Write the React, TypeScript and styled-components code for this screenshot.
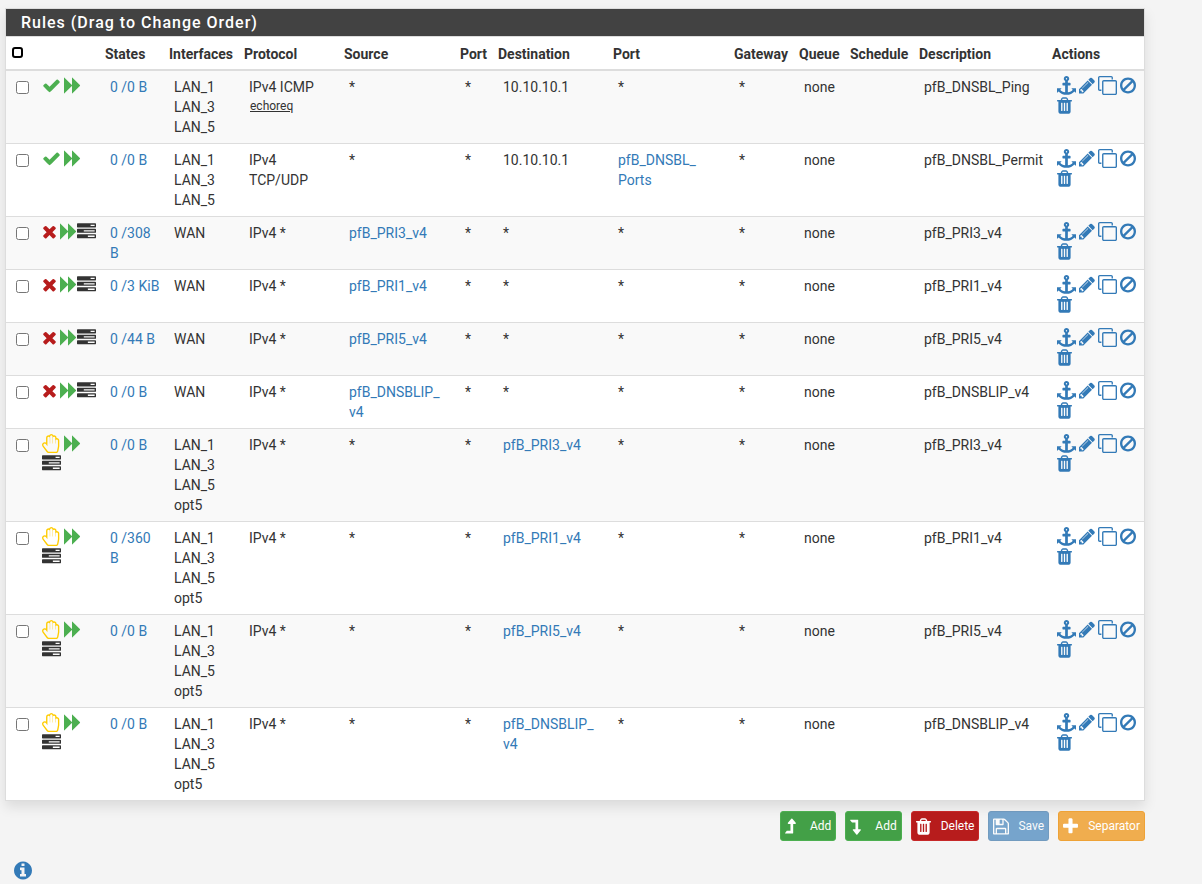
import React from "react";
import styled, { createGlobalStyle, css } from "styled-components";

const GlobalStyle = createGlobalStyle`
  *, *::before, *::after { box-sizing: border-box; }
  body {
    margin: 0;
    background: #f4f4f4;
    color: #333;
    font: 14px/20px Roboto, "Liberation Sans", sans-serif;
  }
`;

type Glyph = { x: number; w: number; d: string };

const glyphs = {
  check: {
    x: 0,
    w: 1792,
    d: "M1671 566q0 40-28 68l-724 724-136 136q-28 28-68 28t-68-28l-136-136-362-362q-28-28-28-68t28-68l136-136q28-28 68-28t68 28l294 295 656-657q28-28 68-28t68 28l136 136q28 28 28 68z",
  },
  times: {
    x: 192,
    w: 1408,
    d: "M1490 1322q0 40-28 68l-136 136q-28 28-68 28t-68-28l-294-294-294 294q-28 28-68 28t-68-28l-136-136q-28-28-28-68t28-68l294-294-294-294q-28-28-28-68t28-68l136-136q28-28 68-28t68 28l294 294 294-294q28-28 68-28t68 28l136 136q28 28 28 68t-28 68l-294 294 294 294q28 28 28 68z",
  },
  hand: {
    x: 0,
    w: 1792,
    d: "M880 128q-46 0-79 33t-33 79v656h-32v-528q0-46-33-79t-79-33-79 33-33 79v784l-154-205q-38-51-102-51-53 0-90.500 37.500t-37.500 90.500q0 43 26 77l384 512q38 51 102 51h688q34 0 61-22t34-56l76-405q5-32 5-59v-498q0-46-33-79t-79-33-79 33-33 79v272h-32v-528q0-46-33-79t-79-33-79 33-33 79v528h-32v-656q0-46-33-79t-79-33zM880 0q68 0 125.500 35.500t88.500 96.500q19-4 42-4 99 0 169.500 70.500t70.500 169.500v17q105-6 180.500 64t75.500 175v498q0 40-8 83l-76 404q-14 79-76.500 131t-143.500 52h-688q-59 0-113.500-27.500t-90.500-74.500l-384-512q-52-69-52-154 0-106 75-181t181-75q70 0 128 34v-434q0-99 70.500-169.500t169.500-70.500q23 0 42 4 31-61 88.500-96.500t125.500-35.500z",
  },
  forward: {
    x: 0,
    w: 1632,
    d: "M45 1651q-19 19-32 13t-13-32v-1472q0-26 13-32t32 13l710 710q9 9 13 19v-710q0-26 13-32t32 13l710 710q19 19 19 45t-19 45l-710 710q-19 19-32 13t-13-32v-710q-4 10-13 19z",
  },
  tasks: {
    x: 0,
    w: 1792,
    d: "M1024 1408h640v-128h-640v128zm-384-512h1024v-128h-1024v128zm640-512h384v-128h-384v128zm512 832v256q0 26-19 45t-45 19h-1664q-26 0-45-19t-19-45v-256q0-26 19-45t45-19h1664q26 0 45 19t19 45zm0-512v256q0 26-19 45t-45 19h-1664q-26 0-45-19t-19-45v-256q0-26 19-45t45-19h1664q26 0 45 19t19 45zm0-512v256q0 26-19 45t-45 19h-1664q-26 0-45-19t-19-45v-256q0-26 19-45t45-19h1664q26 0 45 19t19 45z",
  },
  anchor: {
    x: 0,
    w: 1792,
    d: "M960 256q0-26-19-45t-45-19-45 19-19 45 19 45 45 19 45-19 19-45zm832 928v352q0 22-20 30-8 2-12 2-13 0-23-9l-93-93q-119 143-318.500 226.500t-429.500 83.500-429.500-83.500-318.500-226.500l-93 93q-9 9-23 9-4 0-12-2-20-8-20-30v-352q0-14 9-23t23-9h352q22 0 30 20 8 19-7 35l-100 100q67 91 189.500 153.500t271.500 82.500v-647h-192q-26 0-45-19t-19-45v-128q0-26 19-45t45-19h192v-163q-58-34-93-92.500t-35-128.500q0-106 75-181t181-75 181 75 75 181q0 70-35 128.500t-93 92.500v163h192q26 0 45 19t19 45v128q0 26-19 45t-45 19h-192v647q149-20 271.500-82.500t189.500-153.500l-100-100q-15-16-7-35 8-20 30-20h352q14 0 23 9t9 23z",
  },
  pencil: {
    x: 128,
    w: 1536,
    d: "M491 1536l91-91-235-235-91 91v107h128v128h107zm523-928q0-22-22-22-10 0-17 7l-542 542q-7 7-7 17 0 22 22 22 10 0 17-7l542-542q7-7 7-17zm-54-192l416 416-832 832h-416v-416zm683 96q0 53-37 90l-166 166-416-416 166-165q36-38 90-38 53 0 91 38l235 234q37 39 37 91z",
  },
  clone: {
    x: 0,
    w: 1792,
    d: "M1664 1632v-1088q0-13-9.500-22.500t-22.500-9.500h-1088q-13 0-22.500 9.500t-9.500 22.500v1088q0 13 9.500 22.500t22.500 9.500h1088q13 0 22.500-9.500t9.500-22.500zm128-1088v1088q0 66-47 113t-113 47h-1088q-66 0-113-47t-47-113v-1088q0-66 47-113t113-47h1088q66 0 113 47t47 113zm-384-384v160h-128v-160q0-13-9.500-22.500t-22.500-9.500h-1088q-13 0-22.500 9.500t-9.500 22.500v1088q0 13 9.500 22.500t22.500 9.500h160v128h-160q-66 0-113-47t-47-113v-1088q0-66 47-113t113-47h1088q66 0 113 47t47 113z",
  },
  ban: {
    x: 128,
    w: 1536,
    d: "M1440 893q0-161-87-295l-754 753q137 89 297 89 111 0 211.500-43.500t173.500-116.500 116-174.500 43-212.500zm-999 299l755-754q-135-91-300-91-148 0-273 73t-198 199-73 274q0 162 89 299zm1223-299q0 157-61 300t-163.500 246-245 164-298.500 61-298.500-61-245-164-163.500-246-61-300 61-299.500 163.500-245.500 245-164 298.500-61 298.500 61 245 164 163.500 245.500 61 299.500z",
  },
  trash: {
    x: 192,
    w: 1408,
    d: "M704 1376v-704q0-14-9-23t-23-9h-64q-14 0-23 9t-9 23v704q0 14 9 23t23 9h64q14 0 23-9t9-23zm256 0v-704q0-14-9-23t-23-9h-64q-14 0-23 9t-9 23v704q0 14 9 23t23 9h64q14 0 23-9t9-23zm256 0v-704q0-14-9-23t-23-9h-64q-14 0-23 9t-9 23v704q0 14 9 23t23 9h64q14 0 23-9t9-23zm-544-992h448l-48-117q-7-9-17-11h-317q-10 2-17 11zm928 32v64q0 14-9 23t-23 9h-96v948q0 83-47 143.500t-113 60.500h-832q-66 0-113-58.500t-47-141.500v-952h-96q-14 0-23-9t-9-23v-64q0-14 9-23t23-9h309l70-167q15-37 54-63t79-26h320q40 0 79 26t54 63l70 167h309q14 0 23 9t9 23z",
  },
  levelUp: {
    x: 286,
    w: 1024,
    d: "M1301 619q-18 37-58 37h-192v864q0 14-9 23t-23 9h-704q-21 0-29-18-8-20 4-35l160-192q9-11 25-11h320v-640h-192q-40 0-58-37-17-37 9-68l320-384q18-22 49-22t49 22l320 384q27 32 9 68z",
  },
  levelDown: {
    x: 286,
    w: 1024,
    d: "M315 256h704q13 0 22.500 9.500t9.500 23.500v863h192q40 0 58 37t-9 69l-320 384q-18 22-49 22t-49-22l-320-384q-26-31-9-69 18-37 58-37h192v-640h-320q-14 0-25-11l-160-192q-13-14-4-34 9-19 29-19z",
  },
  save: {
    x: 128,
    w: 1536,
    d: "M512 1536h768v-384h-768v384zm896 0h128v-896q0-14-10-38.500t-20-34.500l-281-281q-10-10-34-20t-39-10v416q0 40-28 68t-68 28h-576q-40 0-68-28t-28-68v-416h-128v1280h128v-416q0-40 28-68t68-28h832q40 0 68 28t28 68v416zm-384-928v-320q0-13-9.500-22.500t-22.500-9.500h-192q-13 0-22.500 9.500t-9.500 22.500v320q0 13 9.500 22.500t22.500 9.500h192q13 0 22.500-9.500t9.500-22.500zm640 32v928q0 40-28 68t-68 28h-1344q-40 0-68-28t-28-68v-1344q0-40 28-68t68-28h928q40 0 88 20t76 48l280 280q28 28 48 76t20 88z",
  },
  plus: {
    x: 192,
    w: 1408,
    d: "M1600 736v192q0 40-28 68t-68 28h-416v416q0 40-28 68t-68 28h-192q-40 0-68-28t-28-68v-416h-416q-40 0-68-28t-28-68v-192q0-40 28-68t68-28h416v-416q0-40 28-68t68-28h192q40 0 68 28t28 68v416h416q40 0 68 28t28 68z",
  },
  info: {
    x: 128,
    w: 1536,
    d: "M1152 1376v-160q0-14-9-23t-23-9h-96v-512q0-14-9-23t-23-9h-320q-14 0-23 9t-9 23v160q0 14 9 23t23 9h96v320h-96q-14 0-23 9t-9 23v160q0 14 9 23t23 9h448q14 0 23-9t9-23zm-128-896v-160q0-14-9-23t-23-9h-192q-14 0-23 9t-9 23v160q0 14 9 23t23 9h192q14 0 23-9t9-23zm640 416q0 209-103 385.500t-279.500 279.500-385.500 103-385.500-103-279.500-279.500-103-385.500 103-385.500 279.500-279.500 385.500-103 385.500 103 279.500 279.500 103 385.500z",
  },
} satisfies Record<string, Glyph>;

type GlyphName = keyof typeof glyphs;

const Svg = styled.svg`
  display: block;
  flex: none;
  fill: currentColor;
`;

function Icon({ name, size = 19 }: { name: GlyphName; size?: number }) {
  const g = glyphs[name];
  return (
    <Svg
      viewBox={`${g.x} 0 ${g.w} 1792`}
      width={Math.round((size * g.w) / 1792)}
      height={size}
      aria-hidden="true"
    >
      <path d={g.d} fillRule={name === "hand" ? "evenodd" : "nonzero"} />
    </Svg>
  );
}

const Page = styled.main`
  padding: 8px 57px 0 5px;
`;

const Panel = styled.section`
  background: #fff;
  border: 1px solid #ddd;
  box-shadow: 0 6px 12px rgba(0, 0, 0, 0.1);
`;

const PanelTitle = styled.h2`
  margin: 0;
  padding: 4px 15px 3px;
  background: #424242;
  border-bottom: 1px solid #ddd;
  color: #fff;
  font-size: 16px;
  line-height: 20px;
  font-weight: 500;
  letter-spacing: 1px;
`;

const RulesTable = styled.table`
  width: 100%;
  table-layout: fixed;
  border-collapse: separate;
  border-spacing: 0;
`;

const Col = styled.col<{ $width?: number }>`
  width: ${(p) => (p.$width ? `${p.$width}px` : "auto")};
`;

const HeadCell = styled.th`
  padding: 7px 5px 5px;
  border-bottom: 2px solid #ddd;
  text-align: left;
  vertical-align: top;
  font-weight: 700;
  white-space: nowrap;
`;

const Row = styled.tr`
  &:nth-child(odd) {
    background: #f9f9f9;
  }
  & + & > td {
    border-top: 1px solid #ddd;
  }
`;

const Cell = styled.td<{ $icons?: boolean }>`
  padding: ${(p) => (p.$icons ? "5px 4px 8px 10px" : "6px 4px 6px 10px")};
  vertical-align: top;
`;

const RowCheck = styled.input`
  display: block;
  width: 13px;
  height: 13px;
  margin: 4px 0 0;
`;

const SelectAll = styled.button`
  display: block;
  width: 11px;
  height: 11px;
  margin: 3px 1px;
  padding: 0;
  background: #fff;
  border: 2px solid #000;
  border-radius: 3px;
`;

const IconFlow = styled.div`
  display: flex;
  flex-wrap: wrap;
  gap: 1px 3px;
`;

const IconPair = styled.span`
  display: flex;
`;

const Tint = styled.span<{ $color: string }>`
  display: flex;
  align-items: center;
  height: 19px;
  color: ${(p) => p.$color};
`;

const Link = styled.a`
  color: #337ab7;
  text-decoration: none;
`;

const IconLink = styled(Link)`
  display: block;
`;

const Small = styled.a`
  display: block;
  padding-left: 1px;
  color: #333;
  font-size: 12px;
  line-height: 18px;
  text-decoration: underline;
`;

const Toolbar = styled.nav`
  display: flex;
  justify-content: flex-end;
  gap: 9px;
  padding-top: 10px;
`;

const tones = {
  success: css`
    background: #43a047;
    border-color: #4caf50;
  `,
  danger: css`
    background: #b71c1c;
    border-color: #c62828;
  `,
  primary: css`
    background: #337ab7;
    border-color: #2e6da4;
    opacity: 0.65;
  `,
  warning: css`
    background: #f0ad4e;
    border-color: #eea236;
  `,
};

const Action = styled.button<{ $tone: keyof typeof tones }>`
  display: flex;
  align-items: center;
  height: 30px;
  padding: 0 4px;
  border: 1px solid;
  border-radius: 3px;
  color: #fff;
  font: 12px/18px Roboto, "Liberation Sans", sans-serif;
  ${(p) => tones[p.$tone]}
`;

const ActionIcon = styled.span`
  width: 25px;
`;

const InfoButton = styled.button`
  display: block;
  margin: 19px 0 0 9px;
  padding: 0;
  border: 0;
  background: none;
  color: #337ab7;
`;

type Kind = "pass" | "block" | "reject";

type Rule = {
  kind: Kind;
  states: string;
  interfaces: string[];
  protocol: string;
  icmp?: string;
  source?: string[];
  destination?: string[];
  address?: string;
  port?: string[];
  description: string;
};

const lan3 = ["LAN_1", "LAN_3", "LAN_5"];
const lan4 = [...lan3, "opt5"];

const rules: Rule[] = [
  { kind: "pass", states: "0 /0 B", interfaces: lan3, protocol: "IPv4 ICMP", icmp: "echoreq", address: "10.10.10.1", description: "pfB_DNSBL_Ping" },
  { kind: "pass", states: "0 /0 B", interfaces: lan3, protocol: "IPv4 TCP/UDP", address: "10.10.10.1", port: ["pfB_DNSBL_", "Ports"], description: "pfB_DNSBL_Permit" },
  { kind: "block", states: "0 /308 B", interfaces: ["WAN"], protocol: "IPv4 *", source: ["pfB_PRI3_v4"], description: "pfB_PRI3_v4" },
  { kind: "block", states: "0 /3 KiB", interfaces: ["WAN"], protocol: "IPv4 *", source: ["pfB_PRI1_v4"], description: "pfB_PRI1_v4" },
  { kind: "block", states: "0 /44 B", interfaces: ["WAN"], protocol: "IPv4 *", source: ["pfB_PRI5_v4"], description: "pfB_PRI5_v4" },
  { kind: "block", states: "0 /0 B", interfaces: ["WAN"], protocol: "IPv4 *", source: ["pfB_DNSBLIP_", "v4"], description: "pfB_DNSBLIP_v4" },
  { kind: "reject", states: "0 /0 B", interfaces: lan4, protocol: "IPv4 *", destination: ["pfB_PRI3_v4"], description: "pfB_PRI3_v4" },
  { kind: "reject", states: "0 /360 B", interfaces: lan4, protocol: "IPv4 *", destination: ["pfB_PRI1_v4"], description: "pfB_PRI1_v4" },
  { kind: "reject", states: "0 /0 B", interfaces: lan4, protocol: "IPv4 *", destination: ["pfB_PRI5_v4"], description: "pfB_PRI5_v4" },
  { kind: "reject", states: "0 /0 B", interfaces: lan4, protocol: "IPv4 *", destination: ["pfB_DNSBLIP_", "v4"], description: "pfB_DNSBLIP_v4" },
];

const columns: { label: string; width?: number }[] = [
  { label: "States", width: 64 },
  { label: "Interfaces", width: 75 },
  { label: "Protocol", width: 100 },
  { label: "Source", width: 116 },
  { label: "Port", width: 38 },
  { label: "Destination", width: 115 },
  { label: "Port", width: 121 },
  { label: "Gateway", width: 65 },
  { label: "Queue", width: 51 },
  { label: "Schedule", width: 69 },
  { label: "Description" },
  { label: "Actions", width: 97 },
];

const rowActions: { name: GlyphName; label: string }[] = [
  { name: "anchor", label: "Move checked rules" },
  { name: "pencil", label: "Edit" },
  { name: "clone", label: "Copy" },
  { name: "ban", label: "Disable" },
  { name: "trash", label: "Delete" },
];

function Alias({ parts }: { parts?: string[] }) {
  if (!parts) return <>*</>;
  return (
    <Link href="#">
      {parts.map((part, i) => (
        <React.Fragment key={part}>
          {i > 0 && <wbr />}
          {part}
        </React.Fragment>
      ))}
    </Link>
  );
}

function Status({ kind }: { kind: Kind }) {
  const forward = (
    <Tint $color="#4caf50">
      <Icon name="forward" />
    </Tint>
  );
  const log = (
    <Tint $color="#333">
      <Icon name="tasks" />
    </Tint>
  );
  if (kind === "pass") {
    return (
      <IconFlow>
        <Tint $color="#4caf50">
          <Icon name="check" />
        </Tint>
        {forward}
      </IconFlow>
    );
  }
  if (kind === "block") {
    return (
      <IconFlow>
        <Tint $color="#b71c1c">
          <Icon name="times" />
        </Tint>
        <IconPair>
          {forward}
          {log}
        </IconPair>
      </IconFlow>
    );
  }
  return (
    <IconFlow>
      <Tint $color="#ffcc00">
        <Icon name="hand" />
      </Tint>
      {forward}
      {log}
    </IconFlow>
  );
}

export default function App() {
  return (
    <>
      <GlobalStyle />
      <Page>
        <Panel>
          <PanelTitle>Rules (Drag to Change Order)</PanelTitle>
          <RulesTable>
            <colgroup>
              <Col $width={26} />
              <Col $width={68} />
              {columns.map((c, i) => (
                <Col key={i} $width={c.width} />
              ))}
            </colgroup>
            <thead>
              <tr>
                <HeadCell>
                  <SelectAll type="button" aria-label="Select all rules" />
                </HeadCell>
                <HeadCell />
                {columns.map((c, i) => (
                  <HeadCell key={i}>{c.label}</HeadCell>
                ))}
              </tr>
            </thead>
            <tbody>
              {rules.map((rule, i) => (
                <Row key={i}>
                  <Cell>
                    <RowCheck type="checkbox" aria-label={`Select ${rule.description}`} />
                  </Cell>
                  <Cell $icons>
                    <Status kind={rule.kind} />
                  </Cell>
                  <Cell>
                    <Link href="#">{rule.states}</Link>
                  </Cell>
                  <Cell>
                    {rule.interfaces.map((name) => (
                      <div key={name}>{name}</div>
                    ))}
                  </Cell>
                  <Cell>
                    {rule.protocol}
                    {rule.icmp && <Small href="#">{rule.icmp}</Small>}
                  </Cell>
                  <Cell>
                    <Alias parts={rule.source} />
                  </Cell>
                  <Cell>*</Cell>
                  <Cell>{rule.address ?? <Alias parts={rule.destination} />}</Cell>
                  <Cell>
                    <Alias parts={rule.port} />
                  </Cell>
                  <Cell>*</Cell>
                  <Cell>none</Cell>
                  <Cell />
                  <Cell>{rule.description}</Cell>
                  <Cell $icons>
                    <IconFlow>
                      {rowActions.map((a) => (
                        <IconLink key={a.name} href="#" aria-label={a.label}>
                          <Icon name={a.name} />
                        </IconLink>
                      ))}
                    </IconFlow>
                  </Cell>
                </Row>
              ))}
            </tbody>
          </RulesTable>
        </Panel>
        <Toolbar>
          <Action type="button" $tone="success">
            <ActionIcon><Icon name="levelUp" /></ActionIcon>
            Add
          </Action>
          <Action type="button" $tone="success">
            <ActionIcon><Icon name="levelDown" /></ActionIcon>
            Add
          </Action>
          <Action type="button" $tone="danger">
            <ActionIcon><Icon name="trash" /></ActionIcon>
            Delete
          </Action>
          <Action type="button" $tone="primary">
            <ActionIcon><Icon name="save" /></ActionIcon>
            Save
          </Action>
          <Action type="button" $tone="warning">
            <ActionIcon><Icon name="plus" /></ActionIcon>
            Separator
          </Action>
        </Toolbar>
        <InfoButton type="button" aria-label="Information">
          <Icon name="info" size={21} />
        </InfoButton>
      </Page>
    </>
  );
}
